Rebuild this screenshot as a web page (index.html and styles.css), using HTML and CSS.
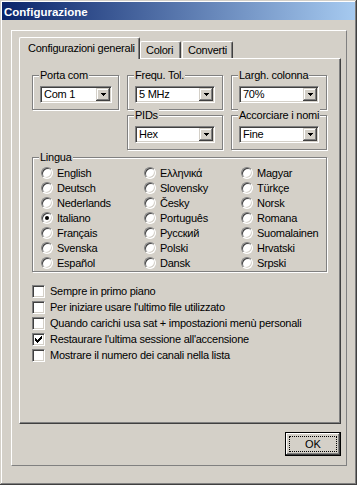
FILE: index.html
```html
<!DOCTYPE html>
<html lang="it">
  <head>
    <meta charset="UTF-8" />
    <meta name="viewport" content="width=device-width, initial-scale=1.0" />
    <title>Configurazione</title>
    <link rel="stylesheet" href="styles.css">
  </head>
  <body>
    <div class="window">
      <div class="titlebar">Configurazione</div>

      <div class="frame">
        <div class="tabs">
          <div class="tab active">Configurazioni generali</div>
          <div class="tab colori">Colori</div>
          <div class="tab converti">Converti</div>
        </div>

        <div class="panel">
          <div class="settings">
            <div class="group porta">
              <span class="caption">Porta com</span>
              <div class="combo">
                <span class="value">Com 1</span>
                <span class="drop"><svg width="5" height="3" viewBox="0 0 5 3"><path d="M0 0h5v1H0zM1 1h3v1H1zM2 2h1v1H2z"/></svg></span>
              </div>
            </div>
            <div class="group">
              <span class="caption">Frequ. Tol.</span>
              <div class="combo">
                <span class="value">5 MHz</span>
                <span class="drop"><svg width="5" height="3" viewBox="0 0 5 3"><path d="M0 0h5v1H0zM1 1h3v1H1zM2 2h1v1H2z"/></svg></span>
              </div>
            </div>
            <div class="group">
              <span class="caption">Largh. colonna</span>
              <div class="combo">
                <span class="value">70%</span>
                <span class="drop"><svg width="5" height="3" viewBox="0 0 5 3"><path d="M0 0h5v1H0zM1 1h3v1H1zM2 2h1v1H2z"/></svg></span>
              </div>
            </div>
            <div class="group pids">
              <span class="caption">PIDs</span>
              <div class="combo">
                <span class="value">Hex</span>
                <span class="drop"><svg width="5" height="3" viewBox="0 0 5 3"><path d="M0 0h5v1H0zM1 1h3v1H1zM2 2h1v1H2z"/></svg></span>
              </div>
            </div>
            <div class="group">
              <span class="caption">Accorciare i nomi</span>
              <div class="combo">
                <span class="value">Fine</span>
                <span class="drop"><svg width="5" height="3" viewBox="0 0 5 3"><path d="M0 0h5v1H0zM1 1h3v1H1zM2 2h1v1H2z"/></svg></span>
              </div>
            </div>
          </div>

          <div class="group lingua">
            <span class="caption">Lingua</span>
            <div class="languages">
              <div class="option"><span class="radio"></span>English</div>
              <div class="option"><span class="radio"></span>Deutsch</div>
              <div class="option"><span class="radio"></span>Nederlands</div>
              <div class="option"><span class="radio on"></span>Italiano</div>
              <div class="option"><span class="radio"></span>Français</div>
              <div class="option"><span class="radio"></span>Svenska</div>
              <div class="option"><span class="radio"></span>Español</div>
              <div class="option"><span class="radio"></span>Ελληνικά</div>
              <div class="option"><span class="radio"></span>Slovensky</div>
              <div class="option"><span class="radio"></span>Česky</div>
              <div class="option"><span class="radio"></span>Português</div>
              <div class="option"><span class="radio"></span>Русский</div>
              <div class="option"><span class="radio"></span>Polski</div>
              <div class="option"><span class="radio"></span>Dansk</div>
              <div class="option"><span class="radio"></span>Magyar</div>
              <div class="option"><span class="radio"></span>Türkçe</div>
              <div class="option"><span class="radio"></span>Norsk</div>
              <div class="option"><span class="radio"></span>Romana</div>
              <div class="option"><span class="radio"></span>Suomalainen</div>
              <div class="option"><span class="radio"></span>Hrvatski</div>
              <div class="option"><span class="radio"></span>Srpski</div>
            </div>
          </div>

          <div class="checks">
            <div class="check"><span class="box"></span>Sempre in primo piano</div>
            <div class="check"><span class="box"></span>Per iniziare usare l'ultimo file utilizzato</div>
            <div class="check"><span class="box"></span>Quando carichi usa sat + impostazioni menù personali</div>
            <div class="check"><span class="box"><svg width="7" height="7" viewBox="0 0 7 7"><path d="M6 0h1v3H6v1H5v1H4v1H3v1H2V6H1V5H0V2h1v1h1v1h1V3h1V2h1V1h1z"/></svg></span>Restaurare l'ultima sessione all'accensione</div>
            <div class="check"><span class="box"></span>Mostrare il numero dei canali nella lista</div>
          </div>
        </div>

        <div class="actions">
          <button type="button" class="btn">OK</button>
        </div>
      </div>
    </div>
  </body>
</html>
```

FILE: styles.css
```css
body {
  margin: 0;
  background: #d4d0c8;
  font-family: "Liberation Sans", Arial, sans-serif;
  font-size: 11px;
  letter-spacing: -0.25px;
  color: #000;
}

.window {
  width: 357px;
  height: 485px;
  box-sizing: border-box;
  padding: 2px;
  background: #d4d0c8;
  box-shadow: inset -1px -1px #404040, inset 1px 1px #d4d0c8,
    inset -2px -2px #808080, inset 2px 2px #fff;
}

.titlebar {
  height: 18px;
  box-sizing: border-box;
  padding: 3px 0 0 2px;
  line-height: 15px;
  background: linear-gradient(to right, #0a246a, #a6caf0);
  color: #fff;
  font-weight: bold;
  font-size: 11.5px;
  letter-spacing: 0;
}

.frame {
  margin: 10px 8px 0 9px;
  height: 436px;
  box-sizing: border-box;
  border: 1px solid;
  border-color: #fff #808080 #808080 #fff;
  padding: 6px 5px 9px 7px;
  display: flex;
  flex-direction: column;
}

/* tab strip */
.tabs {
  display: flex;
  align-items: flex-end;
}

.tab {
  height: 17px;
  box-sizing: border-box;
  padding: 2px 0 0 5px;
  line-height: 13px;
  border: 1px solid;
  border-bottom: 0;
  border-color: #fff #404040 #fff #fff;
  border-radius: 2px 2px 0 0;
  box-shadow: inset -1px 0 #808080;
  background: #d4d0c8;
}

.tab.active {
  width: 121px;
  height: 22px;
  padding: 4px 0 0 8px;
  margin-bottom: -1px;
  position: relative;
  z-index: 1;
}

.tab.colori {
  width: 41px;
}

.tab.converti {
  width: 51px;
  margin-left: 1px;
}

.panel {
  flex: 1;
  border: 1px solid;
  border-color: #fff #404040 #404040 #fff;
  box-shadow: inset -1px -1px #808080;
  padding: 16px 0 0 12px;
}

/* group boxes */
.settings {
  display: grid;
  grid-template-columns: 87px 96px 96px;
  grid-template-rows: 35px 35px;
  gap: 5px 8px;
}

.group {
  position: relative;
  box-sizing: border-box;
  border: 1px solid #808080;
  box-shadow: inset 1px 1px #fff, 1px 1px #fff;
  padding: 10px 0 0 7px;
}

.group.pids {
  grid-column: 2;
}

.caption {
  position: absolute;
  top: -7px;
  left: 6px;
  padding: 0 1px;
  line-height: 13px;
  background: #d4d0c8;
}

.combo {
  width: 80px;
  height: 17px;
  box-sizing: border-box;
  display: flex;
  justify-content: space-between;
  padding: 1px;
  background: #fff;
  border: 1px solid;
  border-color: #808080 #fff #fff #808080;
  box-shadow: inset 1px 1px #404040, inset -1px -1px #d4d0c8;
}

.porta .combo {
  width: 72px;
}

.combo .value {
  padding-left: 2px;
  line-height: 13px;
}

.drop {
  width: 14px;
  display: flex;
  align-items: center;
  justify-content: center;
  background: #d4d0c8;
  box-shadow: inset -1px -1px #404040, inset 1px 1px #d4d0c8,
    inset -2px -2px #808080, inset 2px 2px #fff;
}

/* languages */
.lingua {
  margin-top: 7px;
  width: 295px;
  padding: 7px 0 1px 8px;
}

.languages {
  display: grid;
  grid-template-columns: 103px 97px 1fr;
  grid-template-rows: repeat(7, 15px);
  grid-auto-flow: column;
}

.option {
  display: flex;
  align-items: center;
  gap: 4px;
}

.radio {
  width: 12px;
  height: 12px;
  box-sizing: border-box;
  position: relative;
  border-radius: 50%;
  border: 1px solid;
  border-color: #808080 #fff #fff #808080;
  background: #fff;
  box-shadow: inset 1px 1px #404040, inset -1px -1px #d4d0c8;
}

.radio.on::after {
  content: "";
  position: absolute;
  left: 3px;
  top: 3px;
  width: 4px;
  height: 4px;
  border-radius: 50%;
  background: #000;
}

/* check boxes */
.checks {
  margin-top: 11px;
}

.check {
  height: 16px;
  display: flex;
  align-items: center;
  gap: 5px;
}

.box {
  width: 13px;
  height: 13px;
  box-sizing: border-box;
  display: flex;
  align-items: center;
  justify-content: center;
  border: 1px solid;
  border-color: #808080 #fff #fff #808080;
  background: #fff;
  box-shadow: inset 1px 1px #404040, inset -1px -1px #d4d0c8;
}

.actions {
  display: flex;
  justify-content: flex-end;
  margin-top: 8px;
}

.btn {
  width: 56px;
  height: 24px;
  position: relative;
  padding: 0;
  font: inherit;
  letter-spacing: 0;
  color: #000;
  background: #d4d0c8;
  border: 1px solid #000;
  box-shadow: inset -1px -1px #404040, inset 1px 1px #fff,
    inset -2px -2px #808080;
}

.btn::after {
  content: "";
  position: absolute;
  inset: 3px;
  border: 1px dotted #000;
}
```
